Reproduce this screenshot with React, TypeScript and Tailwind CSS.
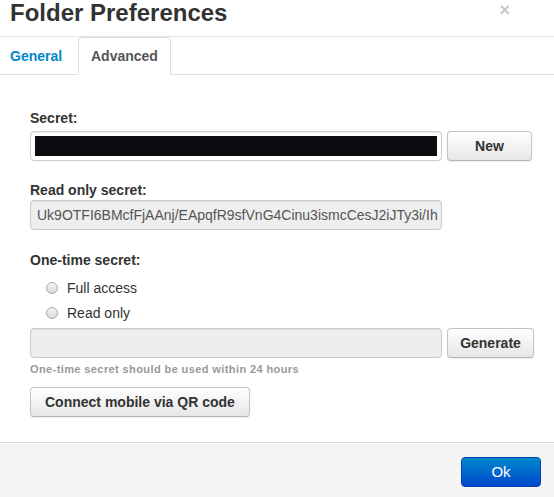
import React from "react";

const btn =
  "h-[30px] px-3 rounded-[4px] border border-[#c5c5c5] border-b-[#b3b3b3] bg-gradient-to-b from-white to-[#e6e6e6] text-[14px] font-bold text-[#333] shadow-[0_1px_2px_rgba(0,0,0,0.08)] whitespace-nowrap";

const input =
  "h-[30px] rounded-[4px] border border-[#ccc] shadow-[inset_0_1px_1px_rgba(0,0,0,0.075)]";

function Radio({ label }: { label: string }) {
  return (
    <label className="flex items-center h-5 pl-[16px] gap-[9px] text-[14px] text-[#333]">
      <span className="w-[12px] h-[12px] rounded-full border border-[#a9a9a9] bg-gradient-to-b from-[#f4f4f4] to-[#d9d9d9]" />
      {label}
    </label>
  );
}

export default function App() {
  return (
    <div
      className="w-[554px] h-[497px] bg-white flex flex-col overflow-hidden text-[#333]"
      style={{ fontFamily: '"Liberation Sans", Arial, sans-serif' }}
    >
      {/* Header */}
      <div className="h-[37px] border-b border-[#e5e5e5] flex items-start justify-between pl-[10px] pr-[44px]">
        <h3 className="text-[24px] leading-[26px] font-bold text-[#333]">Folder Preferences</h3>
        <span className="text-[18px] leading-[20px] font-bold text-[#c8c8c8]">×</span>
      </div>

      {/* Tabs */}
      <ul className="flex h-[38px] border-b border-[#ddd] text-[14px] font-bold">
        <li className="mr-[2px]">
          <a className="block w-[76px] pl-[9px] py-2 leading-5 border border-transparent text-[#0088cc]">
            General
          </a>
        </li>
        <li className="-mb-px">
          <a className="block px-3 py-2 leading-5 border border-[#ddd] border-b-white rounded-t-[4px] bg-white text-[#555]">
            Advanced
          </a>
        </li>
      </ul>

      {/* Body */}
      <div className="flex-1 pl-[30px] pt-[33px]">
        <div className="text-[14px] leading-5 font-bold">Secret:</div>
        <div className="flex gap-[5px] mt-[3px]">
          <div className={`${input} w-[412px] bg-white p-1`}>
            <div className="h-full bg-[#0b0b10]" />
          </div>
          <button className={`${btn} w-[85px]`}>New</button>
        </div>

        <div className="text-[14px] leading-5 font-bold mt-[19px]">Read only secret:</div>
        <div
          className={`${input} w-[412px] bg-[#eee] px-[6px] text-[14px] leading-[28px] text-[#555] overflow-hidden whitespace-nowrap`}
        >
          Uk9OTFI6BMcfFjAAnj/EApqfR9sfVnG4Cinu3ismcCesJ2iJTy3i/Ih
        </div>

        <div className="text-[14px] leading-5 font-bold mt-[20px]">One-time secret:</div>
        <div className="flex flex-col gap-[5px] mt-[8px]">
          <Radio label="Full access" />
          <Radio label="Read only" />
        </div>
        <div className="flex gap-[5px] mt-[5px]">
          <div className={`${input} w-[412px] bg-[#eee]`} />
          <button className={`${btn} w-[87px]`}>Generate</button>
        </div>
        <div className="text-[11px] leading-4 font-bold text-[#999] mt-[3px] tracking-[0.4px]">
          One-time secret should be used within 24 hours
        </div>
        <button className={`${btn} px-[14px] mt-[10px]`}>Connect mobile via QR code</button>
      </div>

      {/* Footer */}
      <div className="h-[55px] border-t border-[#ddd] bg-[#f4f4f4] shadow-[inset_0_1px_0_#fff] flex items-start justify-end pt-[14px] pr-[13px]">
        <button className="w-[80px] h-[30px] rounded-[4px] border border-[#0040b0] bg-gradient-to-b from-[#0088cc] to-[#0044cc] text-white text-[15px]">
          Ok
        </button>
      </div>
    </div>
  );
}
